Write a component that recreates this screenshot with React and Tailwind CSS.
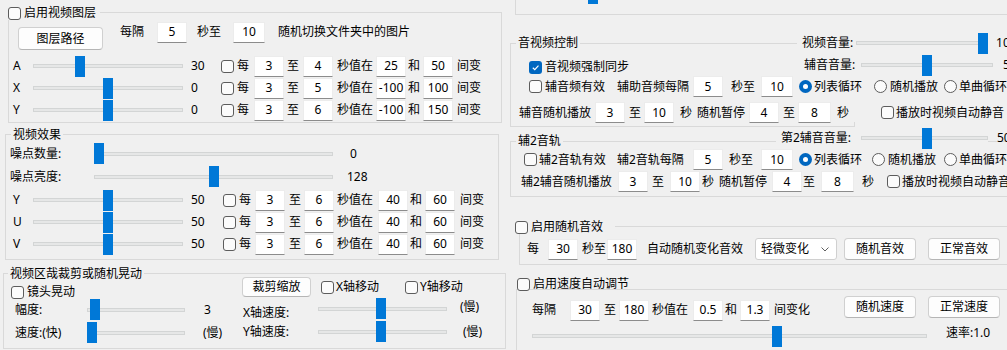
import React from "react";

function Check({ checked, cls = "" }) {
  if (checked) {
    return (
      <span className={`w-[13px] h-[13px] shrink-0 rounded-[3px] bg-[#0067c0] flex items-center justify-center ${cls}`}>
        <svg width="9" height="9" viewBox="0 0 10 10">
          <path d="M2 5.3 L4.2 7.4 L8.3 2.9" fill="none" stroke="white" strokeWidth="1.3" />
        </svg>
      </span>
    );
  }
  return <span className={`w-[13px] h-[13px] shrink-0 rounded-[3px] border border-[#5c5c5c] bg-[#fbfbfb] ${cls}`} />;
}

function Radio({ on }) {
  if (on) {
    return (
      <span className="w-[13px] h-[13px] shrink-0 rounded-full bg-[#0067c0] flex items-center justify-center">
        <span className="w-[5px] h-[5px] rounded-full bg-white" />
      </span>
    );
  }
  return <span className="w-[13px] h-[13px] shrink-0 rounded-full border border-[#5c5c5c] bg-[#fbfbfb]" />;
}

function Field({ v, w = "w-[30px]", cls = "" }) {
  return (
    <span className={`${w} h-[21px] shrink-0 bg-white border border-[#ececec] border-b-[#8c8c8c] flex items-center justify-center ${cls}`}>
      {v}
    </span>
  );
}

function Btn({ children, cls = "" }) {
  return (
    <span className={`shrink-0 bg-[#fdfdfd] border border-[#d0d0d0] border-b-[#b5b5b5] rounded-[4px] flex items-center justify-center ${cls}`}>
      {children}
    </span>
  );
}

function Slider({ w, pos }) {
  return (
    <span className={`relative h-[21px] shrink-0 flex items-center bg-[#f0f0f0] ${w}`}>
      <span className="w-full h-[4px] bg-[#e6e7e7] border border-[#d3d5d5]" />
      <span className={`absolute top-0 w-[10px] h-[21px] bg-[#0078d7] ${pos}`} />
    </span>
  );
}

function LayerRow({ label, pos, val, a, b, c, d, cls = "" }) {
  return (
    <div className={`h-[22px] flex items-center *:shrink-0 ${cls}`}>
      <span className="ml-[4px] w-[20px]">{label}</span>
      <Slider w="w-[150px]" pos={pos} />
      <span className="ml-[8px] w-[30px]">{val}</span>
      <Check />
      <span className="ml-[3px]">每</span>
      <Field v={a} cls="ml-[5px]" />
      <span className="ml-[3px]">至</span>
      <Field v={b} cls="ml-[4px]" />
      <span className="ml-[4px]">秒值在</span>
      <Field v={c} cls="ml-[3px]" />
      <span className="ml-[2px]">和</span>
      <Field v={d} cls="ml-[3px]" />
      <span className="ml-[4px]">间变</span>
    </div>
  );
}

function YuvRow({ label, cls = "" }) {
  return (
    <div className={`h-[22px] flex items-center *:shrink-0 ${cls}`}>
      <span className="ml-[7px] w-[20px]">{label}</span>
      <Slider w="w-[150px]" pos="left-[70px]" />
      <span className="ml-[8px] w-[32px]">50</span>
      <Check />
      <span className="ml-[3px]">每</span>
      <Field v="3" cls="ml-[4px]" />
      <span className="ml-[4px]">至</span>
      <Field v="6" cls="ml-[3px]" />
      <span className="ml-[3px]">秒值在</span>
      <Field v="40" cls="ml-[5px]" />
      <span className="ml-[2px]">和</span>
      <Field v="60" cls="ml-[3px]" />
      <span className="ml-[5px]">间变</span>
    </div>
  );
}

export default function App() {
  return (
    <div className="w-[1007px] h-[350px] overflow-hidden bg-[#f0f0f0] flex text-[12px] leading-[14px] text-black whitespace-nowrap font-['Noto_Sans','Noto_Sans_CJK_SC',sans-serif]">
      {/* left column */}
      <div className="w-[506px] shrink-0 flex flex-col">
        {/* video layer */}
        <div className="ml-[8px] mt-[12px] w-[494px] h-[111px] shrink-0 border border-[#d9d9d9] flex flex-col">
          <div className="-mt-[7px] -ml-[1px] h-[14px] self-start flex items-center bg-[#f0f0f0] pr-[4px]">
            <Check />
            <span className="ml-[3px]">启用视频图层</span>
          </div>
          <div className="mt-[1px] h-[29px] flex items-start *:shrink-0">
            <Btn cls="ml-[9px] mt-[6px] w-[85px] h-[23px]">图层路径</Btn>
            <div className="h-[22px] flex items-center *:shrink-0">
              <span className="ml-[17px] w-[24px]">每隔</span>
              <Field v="5" cls="ml-[13px]" />
              <span className="ml-[10px] w-[24px]">秒至</span>
              <Field v="10" w="w-[32px]" cls="ml-[12px]" />
              <span className="ml-[13px]">随机切换文件夹中的图片</span>
            </div>
          </div>
          <LayerRow cls="mt-[5px]" label="A" pos="left-[42px]" val="30" a="3" b="4" c="25" d="50" />
          <LayerRow label="X" pos="left-[70px]" val="0" a="3" b="5" c="-100" d="100" />
          <LayerRow label="Y" pos="left-[70px]" val="0" a="3" b="6" c="-100" d="150" />
        </div>

        {/* video effects */}
        <div className="ml-[5px] mt-[11px] w-[494px] h-[126px] shrink-0 border border-[#d9d9d9] flex flex-col">
          <span className="-mt-[8px] ml-[5px] h-[15px] px-[2px] self-start bg-[#f0f0f0] flex items-center">视频效果</span>
          <div className="mt-[1px] h-[21px] flex items-center *:shrink-0">
            <span className="ml-[4px] w-[84px]">噪点数量:</span>
            <Slider w="w-[239px]" pos="left-[0px]" />
            <span className="ml-[17px]">0</span>
          </div>
          <div className="mt-[2px] h-[21px] flex items-center *:shrink-0">
            <span className="ml-[4px] w-[84px]">噪点亮度:</span>
            <Slider w="w-[239px]" pos="left-[115px]" />
            <span className="ml-[14px]">128</span>
          </div>
          <YuvRow cls="mt-[2px]" label="Y" />
          <YuvRow label="U" />
          <YuvRow label="V" />
        </div>

        {/* crop / shake */}
        <div className="ml-[3px] mt-[13px] w-[503px] h-[76px] shrink-0 border border-[#d9d9d9] flex flex-col">
          <span className="-mt-[8px] ml-[4px] h-[15px] px-[2px] self-start bg-[#f0f0f0] flex items-center">视频区哉裁剪或随机晃动</span>
          <div className="-mt-[4px] flex *:shrink-0">
            <div className="w-[238px] flex flex-col">
              <div className="mt-[8px] ml-[7px] h-[14px] flex items-center">
                <Check />
                <span className="ml-[3px]">镜头晃动</span>
              </div>
              <div className="h-[21px] flex items-center *:shrink-0">
                <span className="ml-[11px] w-[72px]">幅度:</span>
                <Slider w="w-[98px]" pos="left-[3px]" />
                <span className="ml-[19px]">3</span>
              </div>
              <div className="mt-[2px] h-[21px] flex items-center *:shrink-0">
                <span className="ml-[11px] w-[72px]">速度:(快)</span>
                <Slider w="w-[98px]" pos="left-[0px]" />
                <span className="ml-[18px]">(慢)</span>
              </div>
            </div>
            <div className="flex flex-col">
              <div className="h-[20px] flex items-center *:shrink-0">
                <Btn cls="w-[69px] h-[20px]">裁剪缩放</Btn>
                <Check cls="ml-[10px]" />
                <span className="ml-[2px] w-[69px]">X轴移动</span>
                <Check />
                <span className="ml-[2px]">Y轴移动</span>
              </div>
              <div className="mt-[1px] h-[21px] flex items-center *:shrink-0">
                <span className="ml-[1px] w-[75px] mt-[8px]">X轴速度:</span>
                <Slider w="w-[129px]" pos="left-[58px]" />
                <span className="ml-[13px] -mt-[4px]">(慢)</span>
              </div>
              <div className="mt-[2px] h-[21px] flex items-center *:shrink-0">
                <span className="ml-[1px] w-[75px]">Y轴速度:</span>
                <Slider w="w-[129px]" pos="left-[58px]" />
                <span className="ml-[16px]">(慢)</span>
              </div>
            </div>
          </div>
        </div>
      </div>

      {/* right column */}
      <div className="flex-1 flex flex-col">
        <div className="ml-[9px] h-[15px] shrink-0 border-l border-b border-[#d9d9d9] relative">
          <span className="absolute left-[72px] top-0 w-[10px] h-[4px] bg-[#0078d7]" />
        </div>

        {/* audio/video control: right edge is hidden under the controls, only its foot shows */}
        <div className="relative ml-[4px] mt-[28px] w-[344px] h-[84px] shrink-0 border border-r-0 border-[#d9d9d9] flex flex-col">
          <span className="absolute right-[-1px] bottom-[-1px] w-[1px] h-[5px] bg-[#d9d9d9]" />
          <div className="-mt-[12px] h-[22px] flex items-center *:shrink-0">
            <span className="ml-[5px] px-[2px] bg-[#f0f0f0]">音视频控制</span>
            <span className="ml-[217px] w-[59px] pl-[5px] bg-[#f0f0f0]">视频音量:</span>
            <Slider w="w-[132px]" pos="left-[122px]" />
            <span className="ml-[8px]">100</span>
          </div>
          <div className="h-[22px] flex items-center *:shrink-0">
            <div className="ml-[18px] w-[100px] mt-[4px] flex items-center">
              <Check checked />
              <span className="ml-[3px]">音视频强制同步</span>
            </div>
            <span className="ml-[175px] w-[57px]">辅音音量:</span>
            <Slider w="w-[132px]" pos="left-[61px]" />
            <span className="ml-[10px]">50</span>
          </div>
          <div className="h-[21px] flex items-center *:shrink-0">
            <div className="ml-[18px] w-[76px] flex items-center">
              <Check />
              <span className="ml-[3px]">辅音频有效</span>
            </div>
            <span className="ml-[12px] w-[72px]">辅助音频每隔</span>
            <Field v="5" cls="ml-[4px]" />
            <span className="ml-[8px] w-[24px]">秒至</span>
            <Field v="10" w="w-[32px]" cls="ml-[6px]" />
            <div className="ml-[6px] w-[64px] flex items-center">
              <Radio on />
              <span className="ml-[2px]">列表循环</span>
            </div>
            <div className="ml-[11px] w-[64px] flex items-center">
              <Radio />
              <span className="ml-[3px]">随机播放</span>
            </div>
            <div className="ml-[6px] flex items-center">
              <Radio />
              <span className="ml-[2px]">单曲循环</span>
            </div>
          </div>
          <div className="mt-[5px] h-[21px] flex items-center *:shrink-0">
            <span className="ml-[8px] w-[72px]">辅音随机播放</span>
            <Field v="3" cls="ml-[4px]" />
            <span className="ml-[4px] w-[12px]">至</span>
            <Field v="10" cls="ml-[3px]" />
            <span className="ml-[6px] w-[12px]">秒</span>
            <span className="ml-[5px] w-[48px]">随机暂停</span>
            <Field v="4" cls="ml-[4px]" />
            <span className="ml-[4px] w-[12px]">至</span>
            <Field v="8" w="w-[33px]" cls="ml-[3px]" />
            <span className="ml-[6px] w-[12px]">秒</span>
            <Check cls="ml-[32px]" />
            <span className="ml-[2px]">播放时视频自动静音</span>
          </div>
        </div>

        {/* second aux track */}
        <div className="ml-[4px] mt-[14px] w-[500px] h-[56px] shrink-0 border border-[#d9d9d9] flex flex-col">
          <div className="-mt-[15px] h-[22px] flex items-center *:shrink-0">
            <span className="ml-[5px] mt-[6px] px-[2px] bg-[#f0f0f0]">辅2音轨</span>
            <span className="ml-[213px] w-[85px] pl-[5px] bg-[#f0f0f0]">第2辅音音量:</span>
            <Slider w="w-[127px]" pos="left-[61px]" />
            <span className="ml-[9px]">50</span>
          </div>
          <div className="h-[21px] flex items-center *:shrink-0">
            <div className="ml-[13px] w-[82px] flex items-center">
              <Check />
              <span className="ml-[2px]">辅2音轨有效</span>
            </div>
            <span className="ml-[11px] w-[72px]">辅2音轨每隔</span>
            <Field v="5" cls="ml-[4px]" />
            <span className="ml-[6px] w-[24px]">秒至</span>
            <Field v="10" w="w-[32px]" cls="ml-[8px]" />
            <div className="ml-[6px] w-[64px] flex items-center">
              <Radio on />
              <span className="ml-[2px]">列表循环</span>
            </div>
            <div className="ml-[9px] w-[64px] flex items-center">
              <Radio />
              <span className="ml-[3px]">随机播放</span>
            </div>
            <div className="ml-[8px] flex items-center">
              <Radio />
              <span className="ml-[2px]">单曲循环</span>
            </div>
          </div>
          <div className="mt-[1px] h-[21px] flex items-center *:shrink-0">
            <span className="ml-[10px] w-[97px]">辅2辅音随机播放</span>
            <Field v="3" />
            <span className="ml-[4px] w-[12px]">至</span>
            <Field v="10" cls="ml-[6px]" />
            <span className="ml-[2px] w-[12px]">秒</span>
            <span className="ml-[5px] w-[48px]">随机暂停</span>
            <Field v="4" cls="ml-[5px]" />
            <span className="ml-[1px] w-[12px]">至</span>
            <Field v="8" w="w-[33px]" cls="ml-[6px]" />
            <span className="ml-[8px] w-[12px]">秒</span>
            <Check cls="ml-[13px]" />
            <span className="ml-[2px]">播放时视频自动静音</span>
          </div>
        </div>

        {/* random sound effect */}
        <div className="ml-[13px] mt-[29px] w-[495px] h-[39px] shrink-0 border border-[#d9d9d9] flex flex-col">
          <div className="-mt-[7px] -ml-[5px] h-[14px] self-start flex items-center bg-[#f0f0f0] pr-[12px]">
            <Check />
            <span className="ml-[3px]">启用随机音效</span>
          </div>
          <div className="mt-[4px] h-[22px] flex items-center *:shrink-0">
            <span className="ml-[7px]">每</span>
            <Field v="30" cls="ml-[9px]" />
            <span className="ml-[4px]">秒至</span>
            <Field v="180" cls="ml-[1px]" />
            <span className="ml-[10px]">自动随机变化音效</span>
            <span className="ml-[12px] w-[82px] h-[22px] bg-white border border-[#d0d0d0] rounded-[3px] flex items-center justify-between pl-[5px] pr-[7px]">
              <span>轻微变化</span>
              <svg width="8" height="5" viewBox="0 0 8 5">
                <path d="M0.5 0.5 L4 4 L7.5 0.5" fill="none" stroke="#606060" />
              </svg>
            </span>
            <Btn cls="ml-[7px] w-[72px] h-[22px]">随机音效</Btn>
            <Btn cls="ml-[12px] w-[72px] h-[22px]">正常音效</Btn>
          </div>
        </div>

        {/* speed auto adjust */}
        <div className="ml-[10px] mt-[24px] h-[70px] shrink-0 border-l border-t border-[#d9d9d9] flex flex-col">
          <div className="-mt-[13px] h-[14px] flex items-center">
            <Check />
            <span className="ml-[3px]">启用速度自动调节</span>
          </div>
          <div className="mt-[8px] h-[22px] flex items-center *:shrink-0">
            <span className="ml-[15px] w-[24px]">每隔</span>
            <Field v="30" cls="ml-[14px]" />
            <span className="ml-[4px] w-[12px]">至</span>
            <Field v="180" cls="ml-[3px]" />
            <span className="ml-[3px] w-[36px]">秒值在</span>
            <Field v="0.5" cls="ml-[5px]" />
            <span className="ml-[2px] w-[12px]">和</span>
            <Field v="1.3" cls="ml-[3px]" />
            <span className="ml-[4px] w-[36px]">间变化</span>
            <Btn cls="ml-[34px] -mt-[6px] w-[72px] h-[22px]">随机速度</Btn>
            <Btn cls="ml-[12px] -mt-[6px] w-[72px] h-[22px]">正常速度</Btn>
          </div>
          <div className="mt-[4px] h-[22px] flex items-center *:shrink-0">
            <Slider w="w-[395px] ml-[15px]" pos="left-[240px]" />
            <span className="ml-[19px] -mt-[6px]">速率:1.0</span>
          </div>
        </div>
      </div>
    </div>
  );
}
